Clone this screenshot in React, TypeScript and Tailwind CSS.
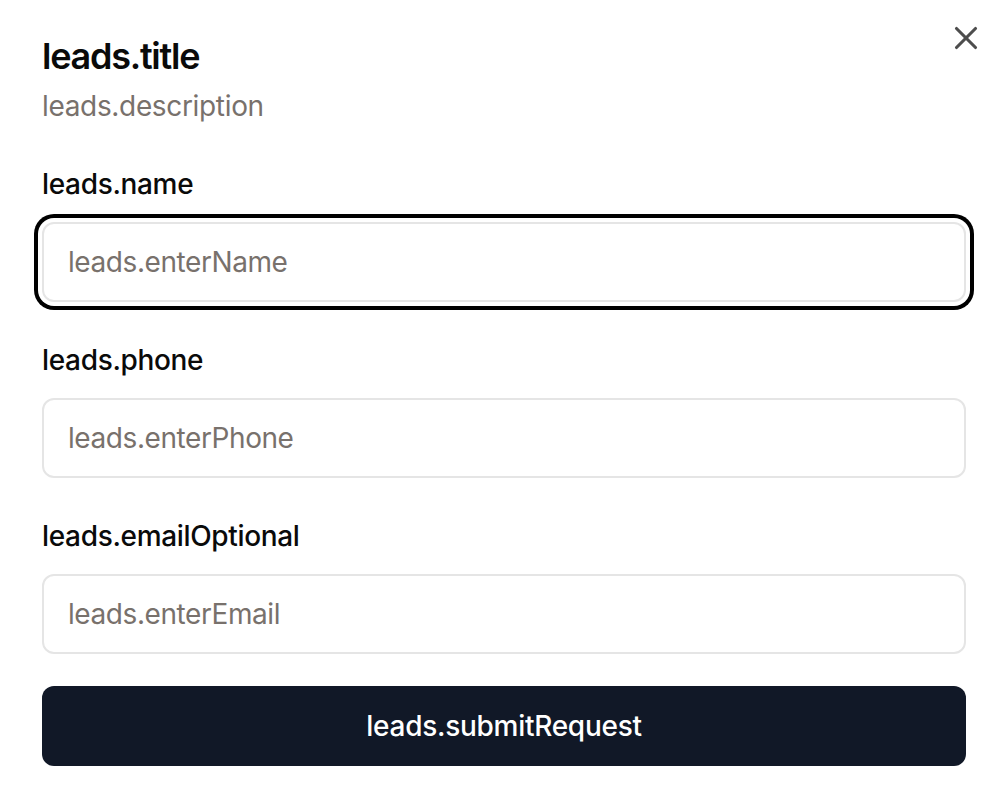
import { X } from "lucide-react";

const CAMPOS = [
  { label: "leads.name", placeholder: "leads.enterName", focus: true },
  { label: "leads.phone", placeholder: "leads.enterPhone", focus: false },
  { label: "leads.emailOptional", placeholder: "leads.enterEmail", focus: false },
];

export default function App() {
  return (
    <div className="relative min-h-[804px] w-full bg-white pl-[42px] pr-[40px] pt-[34px] font-['Inter',sans-serif] text-[#0a0a0a]">
      {/* Cerrar */}
      <button
        type="button"
        aria-label="Cerrar"
        className="absolute right-[20px] top-[18px] flex h-[40px] w-[40px] items-center justify-center text-[#4d4d4d]"
      >
        <X size={38} strokeWidth={2} />
      </button>

      <h2 className="text-[36px] font-semibold leading-[44px] tracking-[-0.035em]">
        leads.title
      </h2>
      <p className="mt-[8px] text-[28px] leading-[40px] tracking-[-0.012em] text-[#78716c]">
        leads.description
      </p>

      <form className="mt-[38px] flex flex-col gap-[38px]">
        {CAMPOS.map((c) => (
          <div key={c.label} className="flex flex-col gap-[18px]">
            <label className="text-[28px] font-medium leading-[40px] tracking-[-0.012em]">
              {c.label}
            </label>
            <input
              autoFocus={c.focus}
              placeholder={c.placeholder}
              className={
                "h-[80px] w-full rounded-[12px] border-2 border-[#e5e5e5] bg-white px-[24px] text-[28px] tracking-[-0.015em] outline-none placeholder:text-[#78716c] " +
                (c.focus ? "ring-4 ring-black ring-offset-4 ring-offset-white" : "")
              }
            />
          </div>
        ))}
      </form>

      <button
        type="button"
        className="mt-[32px] flex h-[80px] w-full items-center justify-center rounded-[12px] bg-[#111827] text-[28px] font-medium tracking-[-0.01em] text-white"
      >
        leads.submitRequest
      </button>
    </div>
  );
}
